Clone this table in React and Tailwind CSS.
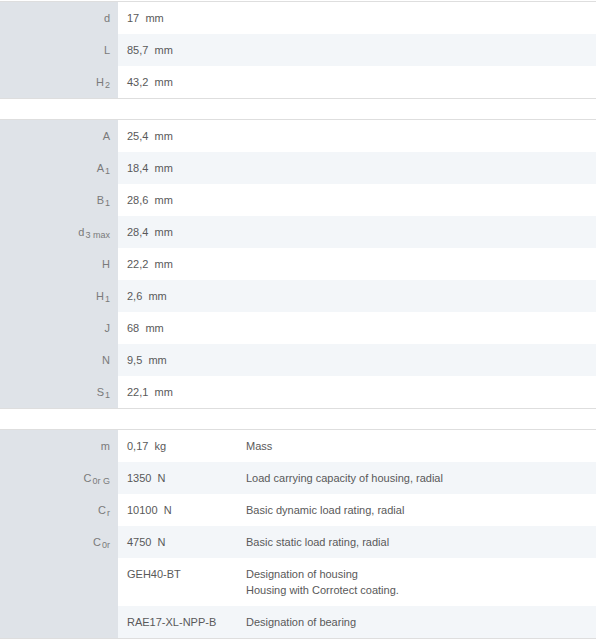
const dims = [
  [
    { label: 'd', value: '17', unit: 'mm' },
    { label: 'L', value: '85,7', unit: 'mm' },
    { label: 'H', sub: '2', value: '43,2', unit: 'mm' },
  ],
  [
    { label: 'A', value: '25,4', unit: 'mm' },
    { label: 'A', sub: '1', value: '18,4', unit: 'mm' },
    { label: 'B', sub: '1', value: '28,6', unit: 'mm' },
    { label: 'd', sub: '3 max', value: '28,4', unit: 'mm' },
    { label: 'H', value: '22,2', unit: 'mm' },
    { label: 'H', sub: '1', value: '2,6', unit: 'mm' },
    { label: 'J', value: '68', unit: 'mm' },
    { label: 'N', value: '9,5', unit: 'mm' },
    { label: 'S', sub: '1', value: '22,1', unit: 'mm' },
  ],
]

const extras = [
  { label: 'm', value: '0,17', unit: 'kg', desc: ['Mass'] },
  { label: 'C', sub: '0r G', value: '1350', unit: 'N', desc: ['Load carrying capacity of housing, radial'] },
  { label: 'C', sub: 'r', value: '10100', unit: 'N', desc: ['Basic dynamic load rating, radial'] },
  { label: 'C', sub: '0r', value: '4750', unit: 'N', desc: ['Basic static load rating, radial'] },
  { label: '', value: 'GEH40-BT', desc: ['Designation of housing', 'Housing with Corrotect coating.'] },
  { label: '', value: 'RAE17-XL-NPP-B', desc: ['Designation of bearing'] },
]

function Label({ row }) {
  return (
    <div className="w-[118px] shrink-0 bg-[#dfe3e8] py-2 pr-[8px] text-right text-[#7a7a7a]">
      {row.label}
      {row.sub && <span className="relative top-[2px] ml-px text-[9px] leading-none">{row.sub}</span>}
    </div>
  )
}

function Value({ row, wide }) {
  return (
    <div className={`${wide ? 'w-[119px] shrink-0' : 'flex-1'} py-2 pl-[9px] text-[#595959]`}>
      {row.value}
      {row.unit && <>&nbsp;&nbsp;{row.unit}</>}
    </div>
  )
}

function Table({ children }) {
  return <div className="border-y border-[#dedede]">{children}</div>
}

export default function App() {
  return (
    <div
      className="w-[596px] bg-white pt-px text-[11px] leading-4"
      style={{ fontFamily: '"Liberation Sans", Arial, sans-serif' }}
    >
      {dims.map((group, gi) => (
        <div key={gi} className="mb-5">
          <Table>
            {group.map((row, i) => (
              <div key={i} className={`flex ${i % 2 ? 'bg-[#f3f6f9]' : 'bg-white'}`}>
                <Label row={row} />
                <Value row={row} />
              </div>
            ))}
          </Table>
        </div>
      ))}
      <Table>
        {extras.map((row, i) => (
          <div key={i} className={`flex ${i % 2 ? 'bg-[#f3f6f9]' : 'bg-white'}`}>
            <Label row={row} />
            <Value row={row} wide />
            <div className="flex-1 py-2 pl-[9px] text-[#595959]">
              {row.desc.map((line) => (
                <div key={line}>{line}</div>
              ))}
            </div>
          </div>
        ))}
      </Table>
    </div>
  )
}
